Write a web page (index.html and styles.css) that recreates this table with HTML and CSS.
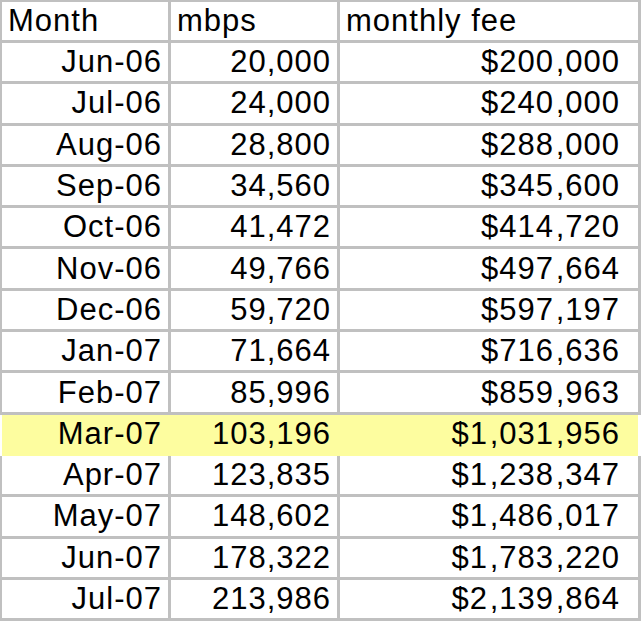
FILE: index.html
```html
<!DOCTYPE html>
<html>
<head>
<meta charset="utf-8">
<link rel="stylesheet" href="styles.css">
</head>
<body>
<table class="sheet">
  <colgroup>
    <col class="c-month">
    <col class="c-mbps">
    <col class="c-fee">
  </colgroup>
  <tr class="head">
    <td>Month</td><td>mbps</td><td>monthly fee</td>
  </tr>
  <tr><td>Jun-06</td><td>20,000</td><td class="fee">$200 ,000</td></tr>
  <tr><td>Jul-06</td><td>24,000</td><td class="fee">$240 ,000</td></tr>
  <tr><td>Aug-06</td><td>28,800</td><td class="fee">$288 ,000</td></tr>
  <tr><td>Sep-06</td><td>34,560</td><td class="fee">$345 ,600</td></tr>
  <tr><td>Oct-06</td><td>41,472</td><td class="fee">$414 ,720</td></tr>
  <tr><td>Nov-06</td><td>49,766</td><td class="fee">$497 ,664</td></tr>
  <tr><td>Dec-06</td><td>59,720</td><td class="fee">$597 ,197</td></tr>
  <tr><td>Jan-07</td><td>71,664</td><td class="fee">$716 ,636</td></tr>
  <tr><td>Feb-07</td><td>85,996</td><td class="fee">$859 ,963</td></tr>
  <tr class="hl"><td>Mar-07</td><td>103,196</td><td class="fee">$1 ,031 ,956</td></tr>
  <tr><td>Apr-07</td><td>123,835</td><td class="fee">$1 ,238 ,347</td></tr>
  <tr><td>May-07</td><td>148,602</td><td class="fee">$1 ,486 ,017</td></tr>
  <tr><td>Jun-07</td><td>178,322</td><td class="fee">$1 ,783 ,220</td></tr>
  <tr><td>Jul-07</td><td>213,986</td><td class="fee">$2 ,139 ,864</td></tr>
</table>
</body>
</html>
```
FILE: styles.css
```css
html, body {
  margin: 0;
  padding: 0;
  background: #ffffff;
}

.sheet {
  border-collapse: separate;
  border-spacing: 3px;
  background: #c0c0c0;
  margin: -1px 0 0 -1px;
  table-layout: fixed;
  width: 642px;
  font-family: "Liberation Sans", Arial, sans-serif;
  font-size: 31px;
  letter-spacing: 1px;
  color: #000;
}

.c-month { width: 166px; }
.c-mbps { width: 166px; }
.c-fee { width: 298px; }

.sheet td {
  background: #ffffff;
  padding: 0 6px 0 5px;
  height: 38.3px;
  line-height: 38px;
  text-align: right;
  white-space: nowrap;
  box-sizing: border-box;
}

.sheet .head td {
  text-align: left;
  height: 38px;
  padding-left: 6px;
}

.sheet td.fee {
  padding-right: 18px;
  word-spacing: -8px;
}

.sheet .hl td {
  background: #fdfd9f;
  box-shadow: 3px 0 0 #fdfd9f, 0 3px 0 #fdfd9f, 3px 3px 0 #fdfd9f;
}

.sheet .hl td:first-child {
  box-shadow: 3px 0 0 #fdfd9f, 0 3px 0 #fdfd9f, 3px 3px 0 #fdfd9f, -3px 0 0 #ffffff, -3px 3px 0 #ffffff;
}

.sheet .hl td:last-child {
  box-shadow: 0 3px 0 #fdfd9f, 3px 0 0 #ffffff, 3px 3px 0 #ffffff;
}
```
